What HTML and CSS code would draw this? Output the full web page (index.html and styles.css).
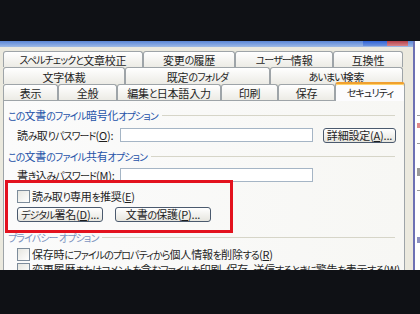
FILE: index.html
```html
<!DOCTYPE html>
<html lang="ja">
<head>
<meta charset="utf-8">
<link rel="stylesheet" href="styles.css">
</head>
<body>
<div class="screen">
  <div class="bar-top"></div>
  <div class="stage">
    <div class="dialog">
      <div class="titlebar"><span class="tb-btn tb-max"></span><span class="tb-btn tb-close"></span></div>
      <div class="dlg-body">
        <div class="tabs">
          <div class="tabrow r1">
            <div class="tab"><span class="k">スペルチェックと</span>文章校正</div>
            <div class="tab">変更<span class="k">の</span>履歴</div>
            <div class="tab"><span class="k">ユーザー</span>情報</div>
            <div class="tab">互換性</div>
          </div>
          <div class="tabrow r2">
            <div class="tab">文字体裁</div>
            <div class="tab">既定<span class="k">のフォルダ</span></div>
            <div class="tab"><span class="k">あいまい</span>検索</div>
          </div>
          <div class="tabrow r3">
            <div class="tab">表示</div>
            <div class="tab">全般</div>
            <div class="tab">編集<span class="k">と</span>日本語入力</div>
            <div class="tab">印刷</div>
            <div class="tab">保存</div>
            <div class="tab sel"><span class="k">セキュリティ</span></div>
          </div>
        </div>
        <div class="panel">
          <div class="grp g1"><span class="grp-title"><span class="k">この</span>文書<span class="k">のファイル</span>暗号化<span class="k">オプション</span></span><span class="sep"></span></div>
          <div class="field f1">
            <span class="label">読<span class="k">み</span>取<span class="k">りパスワード</span>(<u>O</u>):</span>
            <span class="input"></span>
            <span class="btn btn-adv">詳細設定(<u>A</u>)...</span>
          </div>
          <div class="grp g2"><span class="grp-title"><span class="k">この</span>文書<span class="k">のファイル</span>共有<span class="k">オプション</span></span><span class="sep"></span></div>
          <div class="field f2">
            <span class="label">書<span class="k">き</span>込<span class="k">みパスワード</span>(<u>M</u>):</span>
            <span class="input"></span>
          </div>
          <div class="check c1"><span class="box"></span><span class="ctext">読<span class="k">み</span>取<span class="k">り</span>専用<span class="k">を</span>推奨(<u>E</u>)</span></div>
          <div class="btnrow">
            <span class="btn btn-sig"><span class="k">デジタル</span>署名(<u>D</u>)...</span>
            <span class="btn btn-prot">文書<span class="k">の</span>保護(<u>P</u>)...</span>
          </div>
          <div class="grp g3"><span class="grp-title"><span class="k">プライバシー オプション</span></span><span class="sep"></span></div>
          <div class="check c2"><span class="box"></span><span class="ctext">保存時<span class="k">にファイルのプロパティから</span>個人情報<span class="k">を</span>削除<span class="k">する</span>(<u>R</u>)</span></div>
          <div class="check c3"><span class="box"></span><span class="ctext">変更履歴<span class="k">またはコメントを</span>含<span class="k">むファイルを</span>印刷、保存、送信<span class="k">するときに</span>警告<span class="k">を</span>表示<span class="k">する</span>(<u>W</u>)</span></div>
          <div class="redbox"></div>
        </div>
      </div>
    </div>
    <div class="docwin">
      <span class="mk m1"></span>
      <span class="mk m2"></span>
      <span class="mk m3"></span>
      <span class="mk m4"></span>
      <span class="mk m5"></span>
      <span class="mk m6"></span>
    </div>
  </div>
  <div class="bar-bottom"></div>
</div>
</body>
</html>
```

FILE: styles.css
```css
html, body {
  margin: 0;
  padding: 0;
  background: #0f1115;
}
.screen {
  width: 420px;
  height: 314px;
  overflow: hidden;
  display: flex;
  flex-direction: column;
  font-family: "Noto Sans CJK JP", "Noto Sans", sans-serif;
  font-feature-settings: "palt";
  font-size: 11px;
  letter-spacing: -0.2px;
  color: #1e1e1e;
}
.k {
  font-size: 10px;
  letter-spacing: -0.9px;
}
.bar-top {
  height: 41px;
  flex: none;
  background: #0f1115;
}
.bar-bottom {
  height: 44px;
  flex: none;
  background: #0f1115;
}
.stage {
  height: 229px;
  flex: none;
  display: flex;
  overflow: hidden;
}
.dialog {
  width: 413px;
  flex: none;
  background: #ebe9de;
  display: flex;
  flex-direction: column;
}
.titlebar {
  height: 6px;
  flex: none;
  display: flex;
  background: linear-gradient(#5a86d6, #9fbbe6);
}
.tb-btn {
  height: 5px;
  display: block;
}
.tb-max {
  margin-left: auto;
  width: 24px;
  background: linear-gradient(#2f63d6, #6f95de);
}
.tb-close {
  width: 21px;
  margin-right: 5px;
  background: linear-gradient(#b5404a, #d8868a);
}
.dlg-body {
  padding: 4px 0 0 3px;
  display: flex;
  flex-direction: column;
}
.tabs {
  display: flex;
  flex-direction: column;
}
.tabrow {
  display: flex;
  align-items: flex-end;
}
.r1 { height: 16px; }
.r2 { height: 17px; }
.r3 { height: 16px; }
.tab {
  box-sizing: border-box;
  height: 100%;
  border: 1px solid #9ea4a8;
  border-bottom: none;
  border-radius: 3px 3px 0 0;
  background: linear-gradient(#ffffff, #ecebe5);
  display: flex;
  align-items: center;
  justify-content: center;
  line-height: 14px;
  white-space: nowrap;
  padding-top: 1px;
}
.r1 .tab:nth-child(1) { width: 140px; }
.r1 .tab:nth-child(2) { width: 92px; }
.r1 .tab:nth-child(3) { width: 98px; }
.r1 .tab:nth-child(4) { width: 70px; }
.r2 .tab:nth-child(1) { width: 122px; }
.r2 .tab:nth-child(2) { width: 145px; }
.r2 .tab:nth-child(3) { width: 133px; }
.r3 .tab:nth-child(1) { width: 55px; }
.r3 .tab:nth-child(2) { width: 59px; }
.r3 .tab:nth-child(3) { width: 104px; }
.r3 .tab:nth-child(4) { width: 57px; }
.r3 .tab:nth-child(5) { width: 57px; }
.r3 .tab.sel {
  width: 70px;
  margin-top: -2px;
  margin-bottom: -1px;
  height: 19px;
  background: #fcfcfe;
  border-top: 2px solid #f0a030;
  box-shadow: inset 0 1px 0 #ffd36a;
  position: relative;
  z-index: 1;
}
.panel {
  position: relative;
  box-sizing: border-box;
  width: 402px;
  height: 200px;
  border: 1px solid #9ea4a8;
  background: linear-gradient(90deg, #fbfbfb, #f7f7f4);
  padding: 7px 9px 0 4px;
  display: flex;
  flex-direction: column;
}
.grp {
  height: 14px;
  display: flex;
  align-items: center;
  line-height: 14px;
  color: #2452a8;
  white-space: nowrap;
}
.sep {
  flex: 1;
  height: 1px;
  background: #d6d5c8;
  margin-left: 4px;
  margin-top: 1px;
}
.g2 { margin-top: 6px; }
.g3 { margin-top: 8px; color: #7c93bf; }
.field {
  height: 16px;
  display: flex;
  align-items: center;
  white-space: nowrap;
}
.f1 { margin-top: 5px; }
.f2 { margin-top: 4px; }
.label {
  flex: none;
  width: 103px;
  margin-left: 9px;
  line-height: 14px;
}
.input {
  flex: none;
  box-sizing: border-box;
  width: 193px;
  height: 14px;
  border: 1px solid #a5b5c5;
  background: #ffffff;
}
.btn {
  box-sizing: border-box;
  flex: none;
  height: 15px;
  border: 1px solid #4b5a6e;
  border-radius: 3px;
  background: linear-gradient(#ffffff, #e6e5de);
  display: flex;
  align-items: center;
  justify-content: center;
  line-height: 13px;
  white-space: nowrap;
}
.btn-adv {
  width: 73px;
  margin-left: 10px;
}
.check {
  height: 14px;
  display: flex;
  align-items: center;
  white-space: nowrap;
  line-height: 14px;
}
.box {
  box-sizing: border-box;
  flex: none;
  width: 13px;
  height: 13px;
  margin-left: 9px;
  border: 1px solid #7d8c9b;
  background: linear-gradient(135deg, #e6e6e0, #ffffff);
}
.ctext {
  margin-left: 2px;
}
.c1 { margin-top: 6px; }
.c2 { margin-top: 3px; }
.c3 { margin-top: 1px; }
.btnrow {
  margin-top: 4px;
  display: flex;
  padding-left: 9px;
  gap: 12px;
}
.btn-sig { width: 86px; }
.btn-prot { width: 96px; }
.redbox {
  position: absolute;
  left: 1px;
  top: 79px;
  width: 228px;
  height: 53px;
  box-sizing: border-box;
  border: 3px solid #e3121e;
}
.docwin {
  flex: 1;
  position: relative;
  background: #ffffff;
  border-left: 2px solid #6d71b4;
}
.mk {
  position: absolute;
  left: 2px;
  width: 4px;
  height: 1px;
  background: #9a9a9a;
}
.m1 { top: 74px; }
.m2 { top: 82px; height: 5px; background: #e08a8a; }
.m3 { top: 102px; }
.m4 { top: 127px; height: 8px; }
.m5 { top: 149px; }
.m6 { top: 196px; height: 6px; background: #8b8fc0; }
```
